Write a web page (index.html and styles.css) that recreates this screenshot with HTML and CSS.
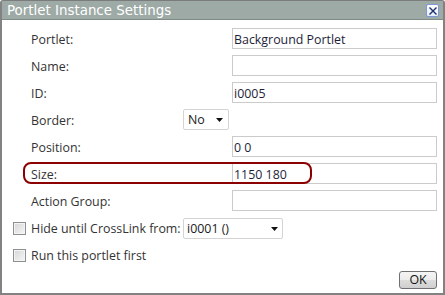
FILE: index.html
```html
<!DOCTYPE html>
<html>
<head>
<meta charset="utf-8">
<link rel="stylesheet" href="styles.css">
</head>
<body>
<div class="dialog">
  <div class="titlebar">
    <span class="title">Portlet Instance Settings</span>
    <span class="close">
      <svg width="8" height="8" viewBox="0 0 8 8"><path d="M0.5 0.5 L7.5 7.5 M7.5 0.5 L0.5 7.5" stroke="#1c2f6e" stroke-width="1.4" fill="none"/></svg>
    </span>
  </div>
  <div class="body">
    <div class="form">
      <label class="lbl">Portlet:</label><span></span><input class="txt" type="text" value="Background Portlet">
      <label class="lbl">Name:</label><span></span><input class="txt" type="text" value="">
      <label class="lbl">ID:</label><span></span><input class="txt" type="text" value="i0005">
      <label class="lbl">Border:</label>
      <div class="sel sel-small"><span>No</span><svg class="arrow" width="7" height="4" viewBox="0 0 7 4"><path d="M0 0 H7 L3.5 4 Z" fill="#111"/></svg></div>
      <span></span>
      <label class="lbl">Position:</label><span></span><input class="txt" type="text" value="0 0">
      <label class="lbl">Size:</label><span></span><input class="txt" type="text" value="1150 180">
      <label class="lbl">Action Group:</label><span></span><input class="txt" type="text" value="">
      <div class="highlight"></div>
    </div>
    <div class="checks">
      <div class="chkrow">
        <span class="chk"></span>
        <span class="chklbl">Hide until CrossLink from:</span>
        <div class="sel sel-wide"><span>i0001 ()</span><svg class="arrow" width="7" height="4" viewBox="0 0 7 4"><path d="M0 0 H7 L3.5 4 Z" fill="#111"/></svg></div>
      </div>
      <div class="chkrow">
        <span class="chk"></span>
        <span class="chklbl">Run this portlet first</span>
      </div>
    </div>
    <div class="footer">
      <button class="ok">OK</button>
    </div>
  </div>
</div>
</body>
</html>
```
FILE: styles.css
```css
html, body {
  margin: 0;
  padding: 0;
  background: #ffffff;
}
.dialog {
  width: 445px;
  height: 295px;
  box-sizing: border-box;
  border: 2px solid #828282;
  border-top: 1px solid #7c7c7c;
  border-radius: 3px 3px 0 0;
  background: #ffffff;
  font-family: "Open Sans", "Noto Sans", sans-serif;
  font-size: 12.4px;
  color: #2a2a2a;
  display: flex;
  flex-direction: column;
}
.titlebar {
  height: 19px;
  background: #9eaaa6;
  border-bottom: 1px solid #7f8b87;
  display: flex;
  align-items: center;
  justify-content: space-between;
  padding: 0 4px 0 5px;
  box-sizing: border-box;
}
.title {
  font-family: "DejaVu Sans", sans-serif;
  font-size: 13.4px;
  color: #ffffff;
  line-height: 19px;
  margin-top: 1px;
}
.close {
  width: 13px;
  height: 13px;
  box-sizing: border-box;
  border: 1px solid #7d9ad6;
  border-radius: 2px;
  background: linear-gradient(#ffffff, #e6eefc);
  display: flex;
  align-items: center;
  justify-content: center;
  margin-top: 1px;
}
.body {
  flex: 1;
  position: relative;
  padding-top: 8px;
}
.form {
  position: relative;
  display: grid;
  grid-template-columns: 152px 49px 205px;
  grid-auto-rows: 21px;
  row-gap: 6px;
  padding-left: 29px;
}
.lbl {
  display: flex;
  align-items: center;
  padding-top: 1px;
  color: #333333;
}
.txt {
  box-sizing: border-box;
  width: 205px;
  height: 21px;
  margin: 0;
  border: 1px solid #cbcbcb;
  padding: 1px 1px 0;
  font-family: inherit;
  font-size: inherit;
  color: #1e1e3a;
  background: #ffffff;
  outline: none;
}
.sel {
  box-sizing: border-box;
  height: 21px;
  border: 1px solid #d4d4d4;
  border-radius: 2px;
  background: #ffffff;
  display: flex;
  align-items: center;
  justify-content: space-between;
  color: #1a1a1a;
}
.sel-small {
  width: 46px;
  padding: 0 5px 0 4px;
}
.sel-wide {
  width: 100px;
  padding: 0 4px 0 3px;
}
.arrow {
  display: block;
}
.highlight {
  position: absolute;
  left: 21px;
  top: 134px;
  width: 289px;
  height: 22px;
  box-sizing: border-box;
  border: 2px solid #8b0000;
  border-radius: 8px;
  pointer-events: none;
}
.checks {
  display: flex;
  flex-direction: column;
  row-gap: 6px;
  margin-top: 7px;
  padding-left: 11px;
}
.chkrow {
  display: flex;
  align-items: center;
  height: 21px;
}
.chk {
  width: 13px;
  height: 13px;
  box-sizing: border-box;
  border: 1px solid #8e8f8f;
  background: linear-gradient(135deg, #d6d6d6, #f6f6f6);
  box-shadow: inset 0 0 0 1px #f4f4f4;
  margin-right: 5px;
  flex: none;
}
.chklbl {
  width: 152px;
  white-space: nowrap;
  color: #333333;
}
.footer {
  display: flex;
  justify-content: flex-end;
  padding-right: 6px;
  margin-top: 5px;
}
.ok {
  width: 38px;
  height: 18px;
  box-sizing: border-box;
  margin: 0;
  padding: 0;
  border: 1px solid #707070;
  border-radius: 3px;
  background: linear-gradient(#f4f4f4 0%, #ebebeb 50%, #dddddd 51%, #cfcfcf 100%);
  font-family: inherit;
  font-size: 12.4px;
  color: #111111;
  line-height: 16px;
}
```
